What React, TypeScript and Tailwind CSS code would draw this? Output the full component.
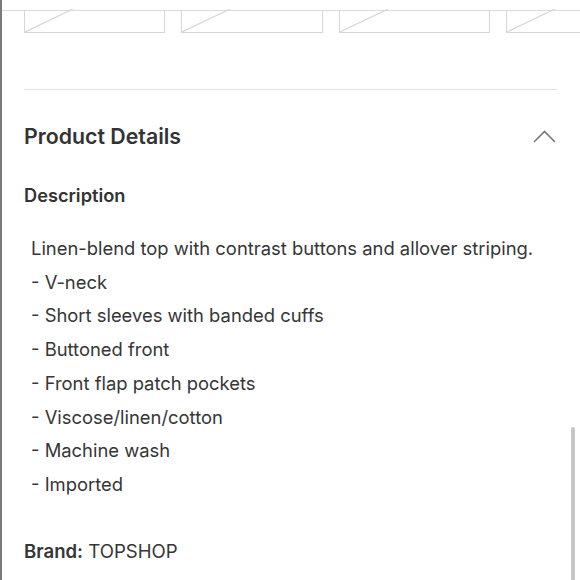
export default function App() {
  const thumbs = [141, 142, 151, 80];

  return (
    <div className="relative h-[580px] w-[580px] overflow-hidden border-l-2 border-[#7a7a7a] bg-white font-['Inter',sans-serif] text-[#363636]">
      {/* Thumbnails cut off at top */}
      <div className="h-[11px] border-b border-[#dcdcdc]" />
      <div className="flex gap-[16px] pl-[22px]">
        {thumbs.map((w, i) => (
          <div
            key={i}
            className="relative -mt-px h-[23px] shrink-0 border-x border-b border-[#d6d6d6]"
            style={{ width: w }}
          >
            <svg className="absolute bottom-0 left-0" width="50" height="23" viewBox="0 0 50 23">
              <line x1="0" y1="23" x2="48" y2="0" stroke="#d6d6d6" strokeWidth="1.2" />
            </svg>
          </div>
        ))}
      </div>

      <div className="pl-[22px] pr-[23px]">
        <div className="mt-[56px] border-t border-[#e2e2e2]" />

        {/* Header */}
        <div className="mt-[32px] flex items-center justify-between">
          <h3 className="text-[21.3px] font-semibold leading-[28px] text-[#333]">Product Details</h3>
          <svg className="mr-[1px]" width="23" height="13" viewBox="0 0 23 13" fill="none">
            <path d="M1 12L11.5 1.5L22 12" stroke="#7a7a7a" strokeWidth="1.6" />
          </svg>
        </div>

        <p className="mt-[33px] text-[18.2px] font-semibold leading-[24px] text-[#333]">Description</p>

        <div className="mt-[25px] pl-[7px] text-[18.4px] leading-[33.7px]">
          <p>Linen-blend top with contrast buttons and allover striping.</p>
          <p>- V-neck</p>
          <p>- Short sleeves with banded cuffs</p>
          <p>- Buttoned front</p>
          <p>- Front flap patch pockets</p>
          <p>- Viscose/linen/cotton</p>
          <p>- Machine wash</p>
          <p>- Imported</p>
        </div>

        <p className="mt-[37px] text-[18.6px] leading-[24px]">
          <span className="font-semibold">Brand:</span> TOPSHOP
        </p>
      </div>

      {/* Scrollbar */}
      <div className="absolute left-[569px] top-[427px] h-[160px] w-[4px] rounded-full bg-[#c6c6c6]" />
    </div>
  );
}
